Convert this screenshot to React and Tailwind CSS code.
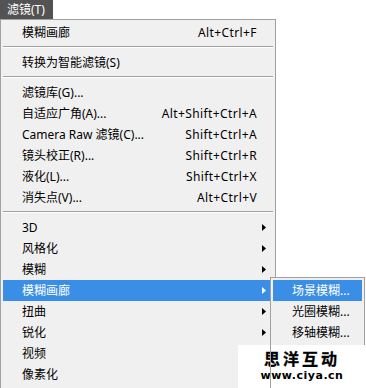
const font = { fontFamily: '"Noto Sans", "Noto Sans CJK SC", sans-serif' };

function Arrow({ white }) {
    return (
        <svg width="4" height="7" viewBox="0 0 4 7" className="shrink-0">
            <path d="M0 0 L4 3.5 L0 7 Z" fill={white ? "#fff" : "#000"} />
        </svg>
    );
}

function Item({ label, shortcut, arrow, active }) {
    return (
        <div
            className={`flex h-[21px] items-center justify-between pl-[19px] ${arrow ? "pr-[7px]" : "pr-[16px]"} ${active ? "bg-[#3b8ee6] text-white" : "text-black"}`}
        >
            <span>{label}</span>
            {shortcut && <span className="tracking-[0.4px]">{shortcut}</span>}
            {arrow && <Arrow />}
        </div>
    );
}

function Sep() {
    return (
        <div className="h-[9px] pt-[3px]">
            <div className="border-t border-[#a0a0a0] border-b border-b-white" />
        </div>
    );
}

export default function App() {
    return (
        <div className="relative w-[366px] h-[388px] overflow-hidden bg-white text-[12px] leading-none" style={font}>
            <div className="w-[53px] h-[19px] bg-[#535353] text-white pl-[7px] flex items-center">滤镜(T)</div>

            <div className="w-[276px] h-[369px] border border-b-0 border-[#a0a0a0] bg-[#f0f0f0] pt-[2px] px-[2px]">
                <Item label="模糊画廊" shortcut="Alt+Ctrl+F" />
                <Sep />
                <Item label="转换为智能滤镜(S)" />
                <Sep />
                <Item label="滤镜库(G)..." />
                <Item label="自适应广角(A)..." shortcut="Alt+Shift+Ctrl+A" />
                <Item label="Camera Raw 滤镜(C)..." shortcut="Shift+Ctrl+A" />
                <Item label="镜头校正(R)..." shortcut="Shift+Ctrl+R" />
                <Item label="液化(L)..." shortcut="Shift+Ctrl+X" />
                <Item label="消失点(V)..." shortcut="Alt+Ctrl+V" />
                <Sep />
                <Item label="3D" arrow />
                <Item label="风格化" arrow />
                <Item label="模糊" arrow />
                <div className="flex h-[21px] items-center justify-between pl-[19px] pr-[7px] bg-[#3b8ee6] text-white">
                    <span>模糊画廊</span>
                    <Arrow white />
                </div>
                <Item label="扭曲" arrow />
                <Item label="锐化" arrow />
                <Item label="视频" />
                <Item label="像素化" arrow />
            </div>

            {/* submenu */}
            <div className="absolute left-[270px] top-[277px] w-[95px] border border-[#a0a0a0] bg-[#f0f0f0] p-[2px]">
                <div className="flex h-[21px] items-center pl-[19px] bg-[#3b8ee6] text-white">场景模糊...</div>
                <div className="flex h-[21px] items-center pl-[19px]">光圈模糊...</div>
                <div className="flex h-[21px] items-center pl-[19px]">移轴模糊...</div>
            </div>

            {/* watermark */}
            <div className="absolute left-[238px] top-[345px] w-[128px] h-[43px] bg-white flex flex-col items-center pt-[6px]">
                <div
                    className="h-[15px] text-[16px] font-bold tracking-[3px] text-black leading-[15px]"
                    style={{ fontFamily: '"Noto Sans CJK SC", sans-serif', WebkitTextStroke: "0.3px #000" }}
                >
                    思洋互动
                </div>
                <div
                    className="mt-[4px] h-[11px] text-[11px] font-bold text-black leading-[11px] tracking-[0.5px]"
                    style={{ fontFamily: '"DejaVu Sans", sans-serif' }}
                >
                    www.ciya.cn
                </div>
            </div>
            <div className="absolute left-[270px] top-[345px] w-px h-[43px] bg-[#a0a0a0]" />
        </div>
    );
}
